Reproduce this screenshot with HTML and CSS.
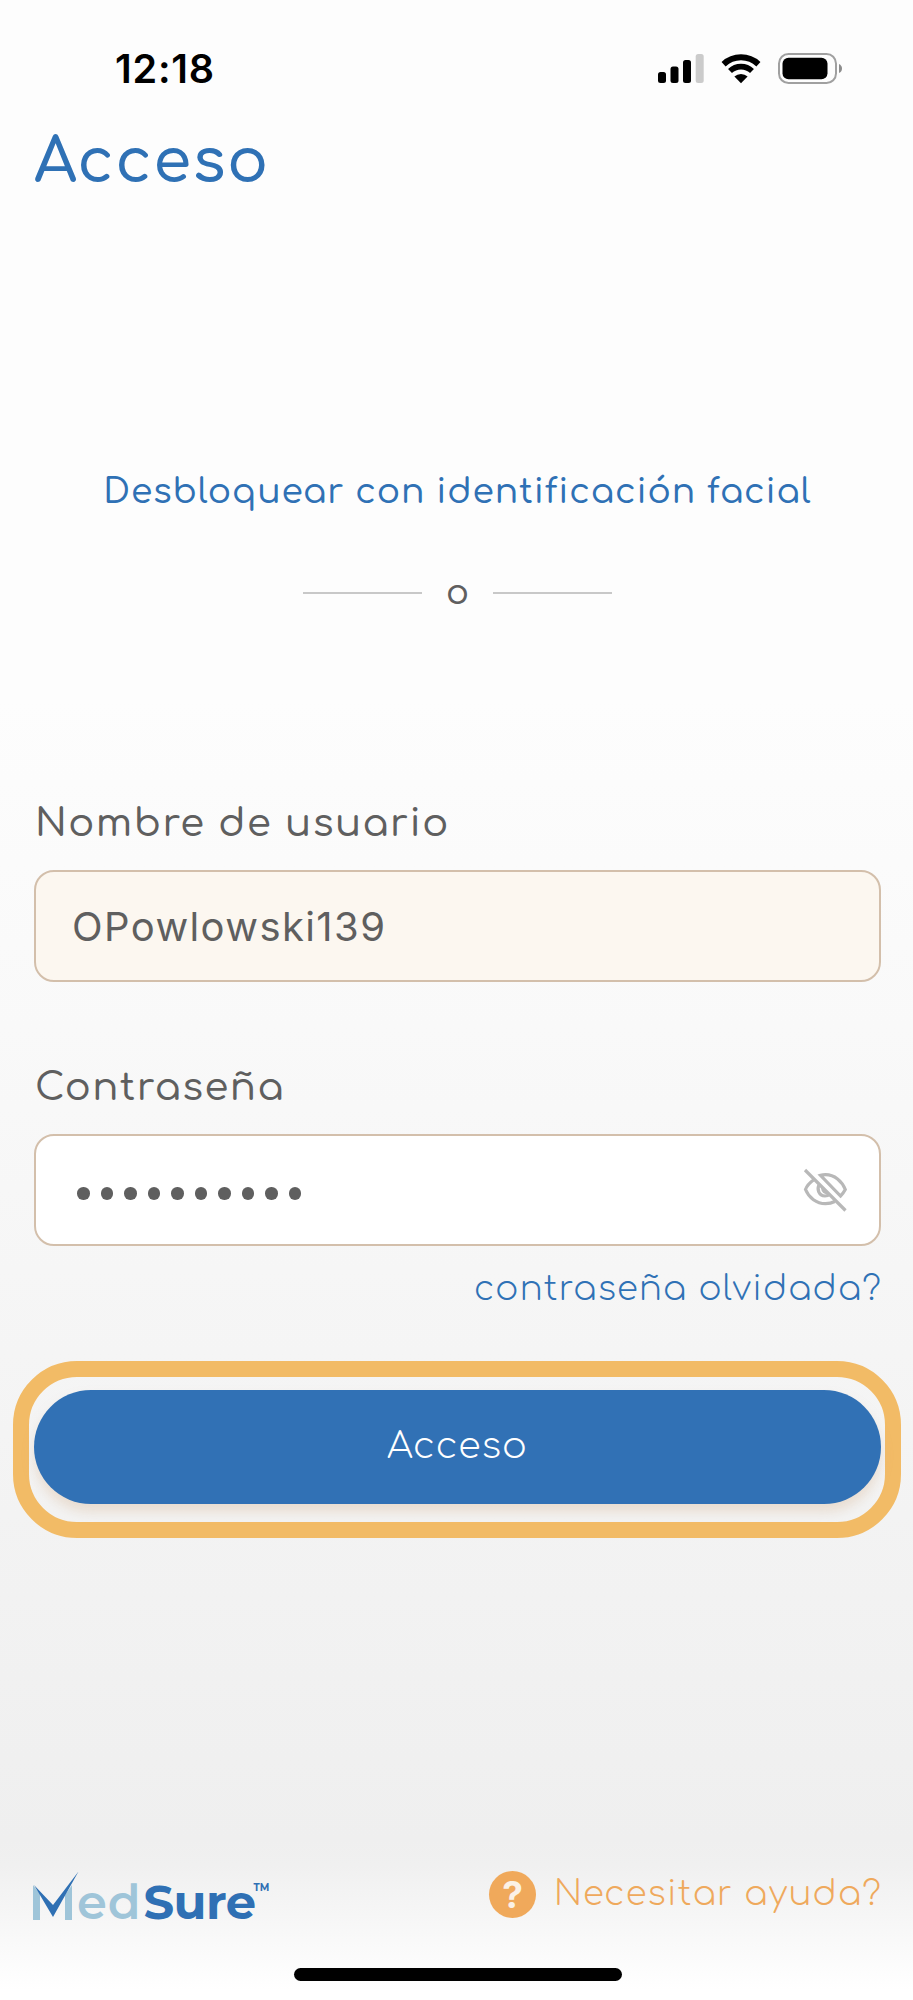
FILE: index.html
```
<!DOCTYPE html>
<html lang="es">
<head>
    <meta charset="UTF-8">
    <meta name="viewport" content="width=device-width, initial-scale=1.0">
    <title>MedSure - Acceso</title>
    <link rel="stylesheet" href="styles.css">
</head>
<body>
    <!-- Status bar -->
    <div class="status-bar">
        <span class="time">12:18</span>
        <div class="status-icons">
            <svg class="signal" width="46" height="30" viewBox="0 0 46 30">
                <rect x="0" y="18" width="8" height="11" rx="2.5"/>
                <rect x="12.5" y="12.5" width="8" height="16.5" rx="2.5"/>
                <rect x="25" y="6" width="8" height="23" rx="2.5"/>
                <rect x="37.7" y="0" width="8" height="29" rx="2.5" fill="#cbcbcb"/>
            </svg>
            <svg class="wifi" width="40" height="30" viewBox="0 0 40 30">
                <path d="M2.6 10.2 A25.5 25.5 0 0 1 37.4 10.2" fill="none" stroke="#000" stroke-width="6"/>
                <path d="M9 17.1 A15.8 15.8 0 0 1 31 17.1" fill="none" stroke="#000" stroke-width="5.6"/>
                <path d="M13.4 22.6 A9.5 9.5 0 0 1 26.6 22.6 L20 29.2 Z"/>
            </svg>
            <svg class="battery" width="65" height="31" viewBox="0 0 65 31">
                <rect x="1" y="1" width="57" height="29" rx="9.5" fill="none" stroke="#a0a0a0" stroke-width="2"/>
                <rect x="4.5" y="4.8" width="45" height="21.4" rx="6"/>
                <path d="M61 11 Q64 12.5 64 15.5 Q64 18.5 61 20 Z" fill="#8c8c8c"/>
            </svg>
        </div>
    </div>

    <main class="login">
        <h1 class="title">Acceso</h1>

        <a class="face-id" href="#">Desbloquear con identificación facial</a>

        <div class="divider">
            <span class="line"></span>
            <span class="or">o</span>
            <span class="line"></span>
        </div>

        <!-- Login form -->
        <form class="login-form">
            <div class="field">
                <label class="label" for="username">Nombre de usuario</label>
                <input class="input filled" type="text" id="username" value="OPowlowski139">
            </div>
            <div class="field">
                <span class="label">Contraseña</span>
                <div class="input password">
                    <div class="dots">
                        <span></span><span></span><span></span><span></span><span></span><span></span><span></span><span></span><span></span><span></span>
                    </div>
                    <svg class="eye" width="44" height="44" viewBox="0 0 44 44" fill="none" stroke="#b8b8b8" stroke-width="3.2">
                        <path d="M10.5 12 C6.5 14.8 3.6 18.5 2.5 21.5 C6 30 13.5 35.7 22.5 35.7 C26 35.7 29 35 31.8 33.5"/>
                        <path d="M17.5 7.3 C19 6.9 20.7 6.7 22.5 6.7 C31.5 6.7 39 13 42.3 21.5 C41 24 39.5 26 37.5 28 Z"/>
                        <path d="M16 17 C13.8 21 15.5 27.5 22 28 C24 28 26 27 27 25.8"/>
                        <path d="M19.5 19.5 C20 24 22 25 25 24.5"/>
                        <path d="M2 2 L42.5 42.5"/>
                    </svg>
                </div>
            </div>
            <a class="forgot" href="#">contraseña olvidada?</a>
            <div class="highlight">
                <button class="submit" type="button">Acceso</button>
            </div>
        </form>
    </main>

    <footer class="footer">
        <div class="logo">
            <svg class="logo-m" width="46" height="50" viewBox="0 0 46 50">
                <path d="M0 14 L7 23 V49 H0 Z" fill="#9fc5d9"/>
                <path d="M32 24 L39 14 V49 H32 Z" fill="#9fc5d9"/>
                <path d="M1 14 L20 34 L45.5 0.5 L20 46 Z" fill="#2f70b4"/>
            </svg>
            <span class="logo-med">ed</span><span class="logo-sure">Sure</span><span class="logo-tm">TM</span>
        </div>
        <a class="help" href="#">
            <span class="help-icon">?</span>
            <span class="help-text">Necesitar ayuda?</span>
        </a>
    </footer>
    <div class="home-bar"></div>
</body>
</html>
```
FILE: styles.css
```
* {
    box-sizing: border-box;
}

body {
    margin: 0;
    height: 2000px;
    overflow: hidden;
    display: flex;
    flex-direction: column;
    font-family: Comfortaa, Lato, sans-serif;
    color: #5f5f5f;
    background: linear-gradient(180deg, #fdfdfd 0, #fdfdfd 700px, #efefef 1840px, #f0f0f0 1865px, #ffffff 1990px);
}

a {
    text-decoration: none;
    color: #2f71b5;
}

/* Status bar */
.status-bar {
    height: 110px;
    padding: 45px 70px 0 115px;
    display: flex;
    justify-content: space-between;
    align-items: flex-start;
    color: #000;
}

.time {
    font-family: Inter, sans-serif;
    font-size: 39.5px;
    font-weight: 600;
    line-height: 49px;
    letter-spacing: 0.8px;
}

.status-icons {
    display: flex;
    align-items: center;
    padding-top: 8px;
}

.wifi {
    margin-left: 17px;
}

.battery {
    margin-left: 17px;
}

/* Login */
.login {
    padding: 0 32px 0 34px;
    display: flex;
    flex-direction: column;
}

.title {
    margin: 12px 0 0;
    font-size: 61px;
    font-weight: 600;
    line-height: 80px;
    letter-spacing: 1.5px;
    color: #2f71b5;
}

.face-id {
    margin-top: 265px;
    text-align: center;
    font-size: 34.5px;
    font-weight: 550;
    line-height: 50px;
    letter-spacing: 0.9px;
    white-space: nowrap;
}

.divider {
    margin-top: 56px;
    height: 40px;
    display: flex;
    justify-content: center;
    align-items: center;
}

.line {
    width: 119px;
    height: 2px;
    background: #c8c8c8;
}

.or {
    width: 71px;
    text-align: center;
    font-size: 34px;
    font-weight: 550;
    line-height: 32px;
}

.login-form {
    margin-top: 186px;
    display: flex;
    flex-direction: column;
}

.field {
    display: flex;
    flex-direction: column;
}

.field + .field {
    margin-top: 81px;
}

.label {
    padding-left: 1px;
    margin-bottom: 21px;
    font-size: 38.5px;
    font-weight: 550;
    line-height: 50px;
    letter-spacing: 1.5px;
}

.input {
    width: 100%;
    height: 112px;
    padding: 0 32px 0 36px;
    border: 2px solid #d3bfab;
    border-radius: 20px;
    background: #fff;
    color: #5f5f5f;
    font-family: Inter, sans-serif;
    font-size: 40px;
    font-weight: 370;
    letter-spacing: 1.4px;
}

.filled {
    background: #fcf7f0;
}

.password {
    display: flex;
    justify-content: space-between;
    align-items: center;
}

.dots {
    display: flex;
    gap: 11px;
    padding: 7px 0 0 5px;
}

.dots span {
    width: 12.5px;
    height: 12.5px;
    border-radius: 50%;
    background: #5f5f5f;
}

.forgot {
    margin: 23px -1px 0 0;
    text-align: right;
    font-size: 34px;
    font-weight: 360;
    line-height: 40px;
    letter-spacing: 1.2px;
}

/* Ring around the login button */
.highlight {
    margin: 52px -20px 0 -21px;
    padding: 13px 4px 18px 5px;
    border: 16px solid #f2bb66;
    border-radius: 64px;
}

.submit {
    display: block;
    width: 100%;
    height: 114px;
    padding: 0 0 2px;
    border: none;
    border-radius: 57px;
    background: #3171b5;
    box-shadow: 0 8px 12px rgba(214, 180, 145, 0.35);
    color: #fff;
    font-family: inherit;
    font-size: 36.5px;
    font-weight: 320;
    letter-spacing: 1px;
}

/* Footer */
.footer {
    margin-top: 326px;
    height: 60px;
    padding: 0 32px 0 33px;
    display: flex;
    justify-content: space-between;
}

.logo {
    display: flex;
    align-items: flex-start;
    font-family: Montserrat, Inter, sans-serif;
    font-size: 48px;
    line-height: 50px;
}

.logo-m {
    margin: 7px -3px 0 0;
}

.logo-med {
    padding: 13px 2px 0 1px;
    font-weight: 600;
    letter-spacing: 0.8px;
    color: #9fc5d9;
}

.logo-sure {
    padding-top: 13px;
    font-weight: 700;
    letter-spacing: -0.5px;
    color: #2f70b4;
}

.logo-tm {
    padding-top: 18px;
    margin-left: -2px;
    font-size: 10px;
    font-weight: 700;
    line-height: 12px;
    color: #2f70b4;
}

.help {
    display: flex;
    align-items: center;
    margin-right: -1px;
    color: #efa95c;
}

.help-icon {
    width: 47px;
    height: 47px;
    border-radius: 50%;
    background: #f0a95b;
    color: #fbf1e6;
    text-align: center;
    font-family: Inter, sans-serif;
    font-size: 37px;
    font-weight: 700;
    line-height: 47px;
}

.help-text {
    margin-left: 18px;
    padding-bottom: 1px;
    font-size: 34px;
    font-weight: 360;
    line-height: 50px;
    letter-spacing: 1.2px;
}

.home-bar {
    width: 328px;
    height: 13px;
    margin: 44px 0 0 294px;
    border-radius: 7px;
    background: #000;
}
```
